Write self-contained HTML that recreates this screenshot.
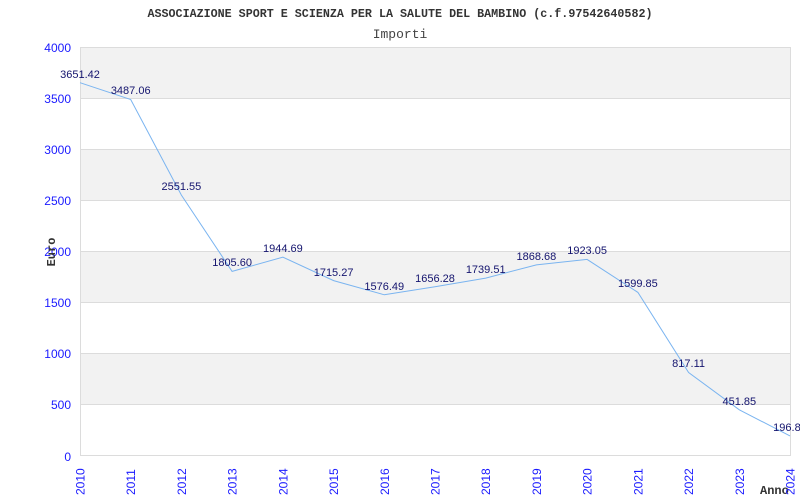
<!DOCTYPE html>
<html><head><style>body{margin:0;background:#fff}svg{display:block}</style></head><body>
<svg width="800" height="500" xmlns="http://www.w3.org/2000/svg" font-family="Liberation Sans, sans-serif">
<rect width="800" height="500" fill="#fff"/>
<rect x="80" y="47" width="710" height="51" fill="#f2f2f2"/>
<rect x="80" y="149" width="710" height="51" fill="#f2f2f2"/>
<rect x="80" y="251" width="710" height="51" fill="#f2f2f2"/>
<rect x="80" y="354" width="710" height="51" fill="#f2f2f2"/>
<g stroke="#dcdcdc" stroke-width="1">
<line x1="80" y1="47.5" x2="790" y2="47.5"/><line x1="80" y1="98.5" x2="790" y2="98.5"/><line x1="80" y1="149.5" x2="790" y2="149.5"/><line x1="80" y1="200.5" x2="790" y2="200.5"/><line x1="80" y1="251.5" x2="790" y2="251.5"/><line x1="80" y1="302.5" x2="790" y2="302.5"/><line x1="80" y1="353.5" x2="790" y2="353.5"/><line x1="80" y1="404.5" x2="790" y2="404.5"/><line x1="80" y1="455.5" x2="790" y2="455.5"/>
<line x1="80.5" y1="47" x2="80.5" y2="456"/><line x1="790.5" y1="47" x2="790.5" y2="456"/>
</g>
<text x="400" y="17" text-anchor="middle" font-family="Liberation Mono, monospace" font-size="11.7" font-weight="bold" fill="#333">ASSOCIAZIONE SPORT E SCIENZA PER LA SALUTE DEL BAMBINO (c.f.97542640582)</text>
<text x="400" y="38" text-anchor="middle" font-family="Liberation Mono, monospace" font-size="13" fill="#444">Importi</text>
<g fill="#1a1aff" font-size="12" text-anchor="end">
<text x="71" y="52">4000</text><text x="71" y="103">3500</text><text x="71" y="154">3000</text><text x="71" y="205">2500</text><text x="71" y="256">2000</text><text x="71" y="307">1500</text><text x="71" y="358">1000</text><text x="71" y="409">500</text><text x="71" y="461">0</text>
</g>
<text transform="translate(55,252) rotate(-90)" text-anchor="middle" font-family="Liberation Mono, monospace" font-size="12" font-weight="bold" fill="#333">Euro</text>
<text x="760" y="494" font-family="Liberation Mono, monospace" font-size="12" font-weight="bold" fill="#333">Anno</text>
<g fill="#1a1aff" font-size="12">
<text transform="translate(84.5,495) rotate(-90)">2010</text>
<text transform="translate(135.2,495) rotate(-90)">2011</text>
<text transform="translate(185.9,495) rotate(-90)">2012</text>
<text transform="translate(236.6,495) rotate(-90)">2013</text>
<text transform="translate(287.3,495) rotate(-90)">2014</text>
<text transform="translate(338.1,495) rotate(-90)">2015</text>
<text transform="translate(388.8,495) rotate(-90)">2016</text>
<text transform="translate(439.5,495) rotate(-90)">2017</text>
<text transform="translate(490.2,495) rotate(-90)">2018</text>
<text transform="translate(540.9,495) rotate(-90)">2019</text>
<text transform="translate(591.6,495) rotate(-90)">2020</text>
<text transform="translate(642.4,495) rotate(-90)">2021</text>
<text transform="translate(693.1,495) rotate(-90)">2022</text>
<text transform="translate(743.8,495) rotate(-90)">2023</text>
<text transform="translate(794.5,495) rotate(-90)">2024</text>
</g>
<polyline fill="none" stroke="#7ab4f0" stroke-width="1" points="80,82.7 130.7,99.5 181.4,195.1 232.1,271.4 282.9,257.2 333.6,280.6 384.3,294.8 435,286.7 485.7,278.1 536.4,264.9 587.1,259.4 637.9,292.4 688.6,372.5 739.3,409.8 790,435.9"/>
<g fill="#14146e" font-size="11" text-anchor="middle">
<text x="80" y="78">3651.42</text>
<text x="130.7" y="94">3487.06</text>
<text x="181.4" y="190">2551.55</text>
<text x="232.1" y="266">1805.60</text>
<text x="282.9" y="252">1944.69</text>
<text x="333.6" y="276">1715.27</text>
<text x="384.3" y="290">1576.49</text>
<text x="435" y="282">1656.28</text>
<text x="485.7" y="273">1739.51</text>
<text x="536.4" y="260">1868.68</text>
<text x="587.1" y="254">1923.05</text>
<text x="637.9" y="287">1599.85</text>
<text x="688.6" y="367">817.11</text>
<text x="739.3" y="405">451.85</text>
<text x="790" y="431">196.83</text>
</g>
</svg>
</body></html>
